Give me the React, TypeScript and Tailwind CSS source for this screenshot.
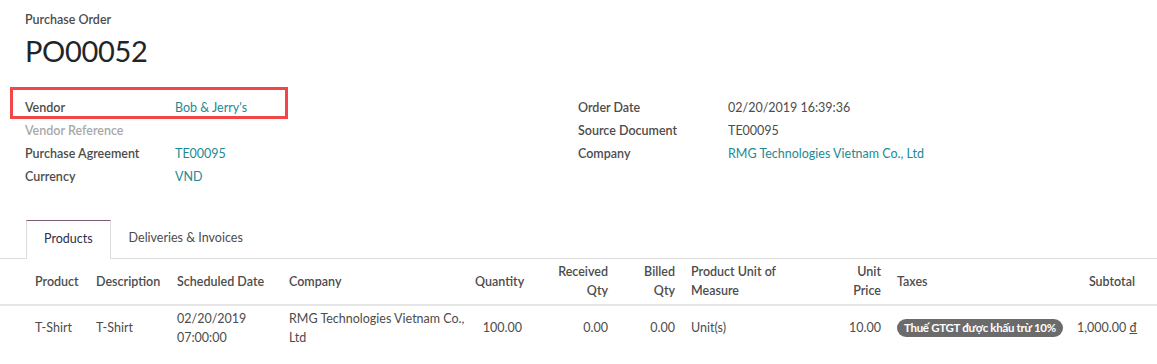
import React from 'react';

const font = { fontFamily: 'Lato, "Open Sans", sans-serif' };

type Field = { label: string; value?: string; link?: boolean; muted?: boolean };

const leftFields: Field[] = [
  { label: 'Vendor', value: "Bob & Jerry's", link: true },
  { label: 'Vendor Reference', muted: true },
  { label: 'Purchase Agreement', value: 'TE00095', link: true },
  { label: 'Currency', value: 'VND', link: true },
];

const rightFields: Field[] = [
  { label: 'Order Date', value: '02/20/2019 16:39:36' },
  { label: 'Source Document', value: 'TE00095' },
  { label: 'Company', value: 'RMG Technologies Vietnam Co., Ltd', link: true },
];

function FieldRow({ f, highlight }: { f: Field; highlight?: boolean }) {
  return (
    <div className="relative flex h-[23px] items-center text-[12.5px]">
      <div
        className={
          'w-[150px] shrink-0 font-semibold ' +
          (f.muted ? 'text-[#a8a8a8]' : 'text-[#4c4c4c]')
        }
      >
        {f.label}
      </div>
      {f.value && (
        <div className={f.link ? 'text-[#1b8a93]' : 'text-[#4c4c4c]'}>{f.value}</div>
      )}
      {highlight && (
        <div className="pointer-events-none absolute left-[-15px] top-[-10px] h-[32px] w-[278px] border-[3px] border-[#f2464a]" />
      )}
    </div>
  );
}

// column: width, alignment
const cols: { w: string; right?: boolean }[] = [
  { w: 'w-[61px]' },
  { w: 'w-[81px]' },
  { w: 'w-[112px]' },
  { w: 'w-[186px]' },
  { w: 'w-[63px]', right: true },
  { w: 'w-[86px]', right: true },
  { w: 'w-[67px]', right: true },
  { w: 'w-[157px]' },
  { w: 'w-[49px]', right: true },
  { w: 'w-[180px]' },
  { w: 'w-[74px]', right: true },
];

const headers: React.ReactNode[] = [
  'Product',
  'Description',
  'Scheduled Date',
  'Company',
  'Quantity',
  <>Received<br />Qty</>,
  <>Billed<br />Qty</>,
  <>Product Unit of<br />Measure</>,
  <>Unit<br />Price</>,
  'Taxes',
  'Subtotal',
];

const row: React.ReactNode[] = [
  'T-Shirt',
  'T-Shirt',
  <>02/20/2019<br />07:00:00</>,
  <>RMG Technologies Vietnam Co.,<br />Ltd</>,
  '100.00',
  '0.00',
  '0.00',
  'Unit(s)',
  '10.00',
  <span className="inline-flex h-[18px] items-center rounded-full bg-[#6b6b6b] px-[7px] text-[11.5px] font-bold tracking-[-0.3px] text-white">
    Thuế GTGT được khấu trừ 10%
  </span>,
  <>1,000.00 <span className="underline">₫</span></>,
];

export default function App() {
  return (
    <div className="h-[364px] w-[1157px] overflow-hidden bg-white" style={font}>
      <div className="px-[25px] pt-[11px]">
        <div className="text-[12.5px] font-semibold text-[#4c4c4c]">Purchase Order</div>
        <div className="mt-[3px] text-[29px] leading-[36px] tracking-[-0.3px] text-[#212529]">PO00052</div>
      </div>

      <div className="mt-[28px] flex px-[25px]">
        <div className="w-[553px]">
          {leftFields.map((f, i) => (
            <FieldRow key={f.label} f={f} highlight={i === 0} />
          ))}
        </div>
        <div className="w-[553px]">
          {rightFields.map((f) => (
            <FieldRow key={f.label} f={f} />
          ))}
        </div>
      </div>

      <div className="mt-[31px] flex h-[39px] border-b border-[#dcdcdc] pl-[26px] text-[12.5px]">
        <div className="mb-[-1px] flex items-center border-x border-t border-x-[#dcdcdc] border-t-[#7c5877] bg-white px-[17px] text-[#2c2f4a]">
          Products
        </div>
        <div className="flex items-center px-[18px] text-[#4c4c4c]">Deliveries &amp; Invoices</div>
      </div>

      <div className="text-[12.5px] leading-[19px]">
        <div className="flex h-[47px] items-center border-b-2 border-[#e6e6e6] pl-[27px] font-semibold text-[#4c4c4c]">
          {headers.map((h, i) => (
            <div key={i} className={cols[i].w + ' shrink-0 px-[8px] ' + (cols[i].right ? 'text-right' : '')}>
              {h}
            </div>
          ))}
        </div>
        <div className="flex h-[44px] items-center pl-[27px] text-[#4c4c4c]">
          {row.map((c, i) => (
            <div
              key={i}
              className={cols[i].w + ' shrink-0 whitespace-nowrap px-[8px] ' + (cols[i].right ? 'text-right' : '')}
            >
              {c}
            </div>
          ))}
        </div>
      </div>
    </div>
  );
}
